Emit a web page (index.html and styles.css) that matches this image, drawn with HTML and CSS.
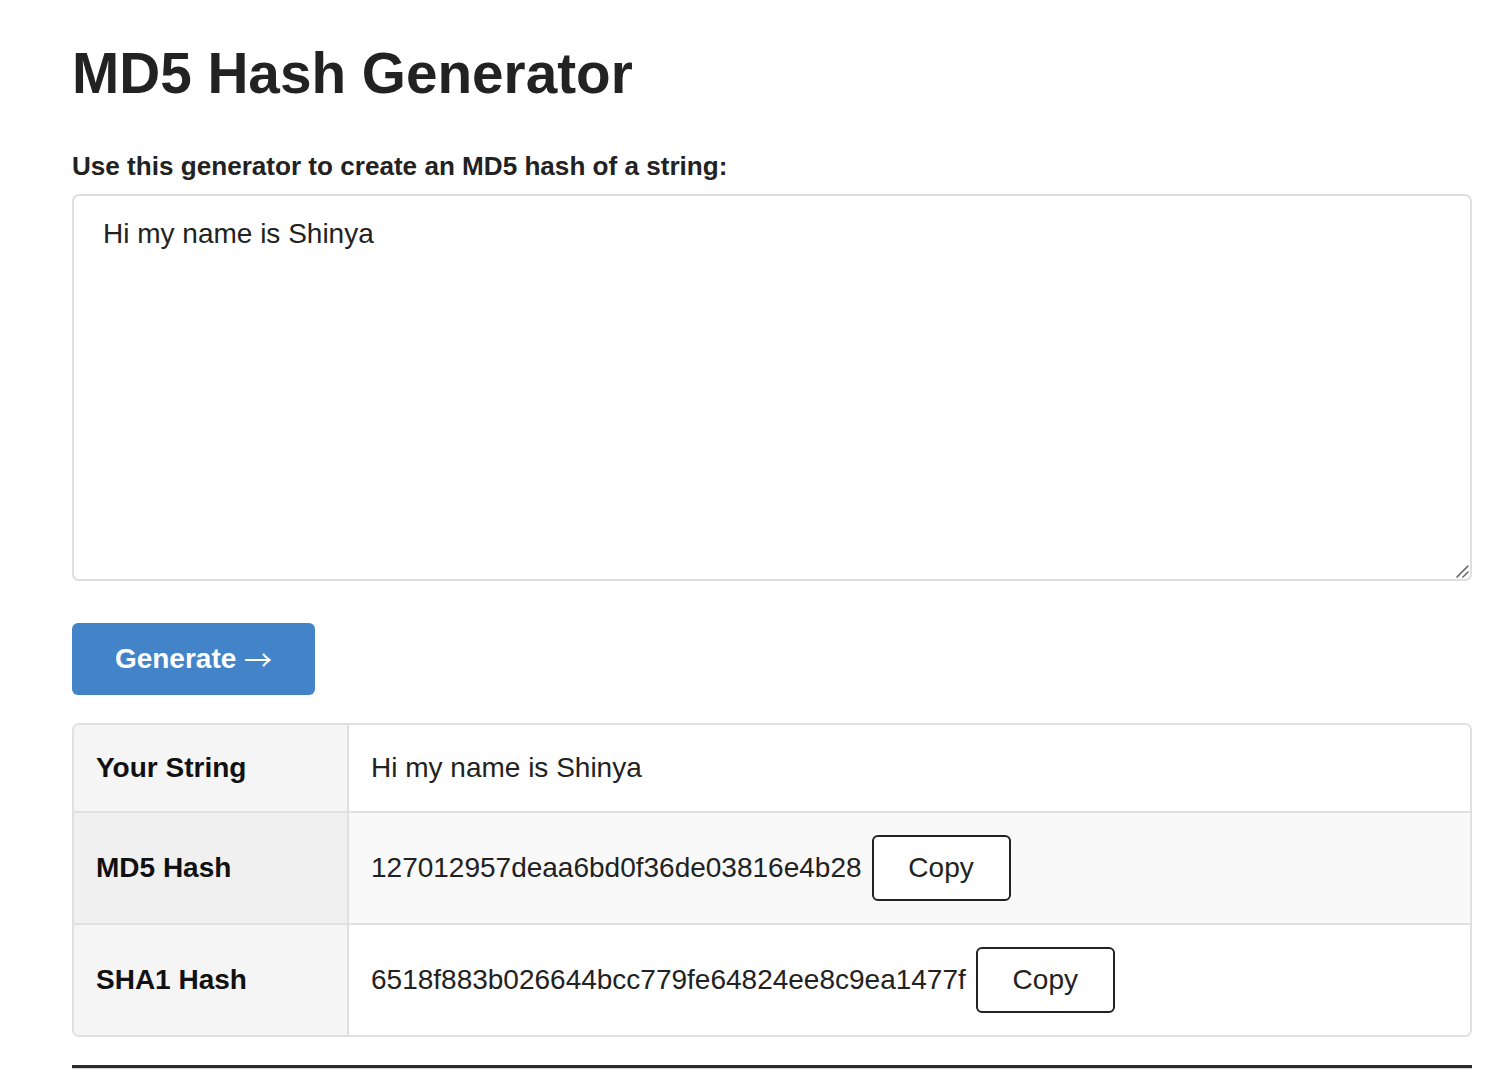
FILE: index.html
```html
<!DOCTYPE html>
<html lang="en">
<head>
<meta charset="utf-8">
<title>MD5 Hash Generator</title>
<link rel="stylesheet" href="styles.css">
</head>
<body>
<main class="page">
  <h1 class="title">MD5 Hash Generator</h1>
  <label class="field-label" for="input">Use this generator to create an MD5 hash of a string:</label>
  <div class="input-wrap">
    <textarea id="input" class="input">Hi my name is Shinya</textarea>
    <svg class="grip" width="14" height="14" viewBox="0 0 14 14" aria-hidden="true">
      <path d="M2 13 L13 2" stroke="#666" stroke-width="1.6" stroke-linecap="round"/>
      <path d="M8 13 L13 8" stroke="#666" stroke-width="1.6" stroke-linecap="round"/>
    </svg>
  </div>
  <button class="generate" type="button">Generate <span class="arrow">→</span></button>
  <table class="results">
    <tr class="row">
      <th class="key">Your String</th>
      <td class="val">Hi my name is Shinya</td>
    </tr>
    <tr class="row row-alt">
      <th class="key">MD5 Hash</th>
      <td class="val"><div class="hash"><span>127012957deaa6bd0f36de03816e4b28</span><button class="copy" type="button">Copy</button></div></td>
    </tr>
    <tr class="row">
      <th class="key">SHA1 Hash</th>
      <td class="val"><div class="hash"><span>6518f883b026644bcc779fe64824ee8c9ea1477f</span><button class="copy" type="button">Copy</button></div></td>
    </tr>
  </table>
  <hr class="rule">
</main>
</body>
</html>
```

FILE: styles.css
```css
html, body {
  margin: 0;
  padding: 0;
  background: #ffffff;
}

body {
  font-family: "Liberation Sans", Arial, Helvetica, sans-serif;
  color: #222222;
}

.page {
  width: 1400px;
  margin: 0 0 0 72px;
  padding-top: 40px;
  display: flex;
  flex-direction: column;
  align-items: flex-start;
}

.title {
  margin: 0 0 43px 0;
  font-size: 56.7px;
  line-height: 68px;
  font-weight: 700;
  color: #222222;
}

.field-label {
  font-size: 26.1px;
  line-height: 31px;
  font-weight: 700;
  margin-bottom: 12px;
}

.input-wrap {
  position: relative;
  width: 1400px;
  height: 387px;
}

.input {
  display: block;
  box-sizing: border-box;
  width: 1400px;
  height: 387px;
  margin: 0;
  padding: 17px 29px;
  border: 2px solid #dedede;
  border-radius: 7px;
  font-family: "Liberation Sans", Arial, Helvetica, sans-serif;
  font-size: 28px;
  line-height: 42px;
  color: #222222;
  background: #ffffff;
  resize: none;
  outline: none;
}

.grip {
  position: absolute;
  right: 3px;
  bottom: 3px;
}

.generate {
  margin-top: 42px;
  box-sizing: border-box;
  width: 243px;
  height: 72px;
  padding: 0 0 0 0;
  border: none;
  border-radius: 6px;
  background: #4384c9;
  color: #ffffff;
  font-family: "Liberation Sans", Arial, Helvetica, sans-serif;
  font-size: 28px;
  font-weight: 700;
  line-height: 42px;
}

.arrow {
  font-family: "Noto Sans CJK JP", "DejaVu Sans", sans-serif;
  font-weight: 400;
  font-size: 28px;
  vertical-align: -3px;
}

.results {
  margin-top: 28px;
  width: 1400px;
  border-collapse: separate;
  border-spacing: 0;
  border: 2px solid #e0e0e0;
  border-radius: 7px;
  overflow: hidden;
  font-size: 28px;
  line-height: 42px;
}

.key {
  width: 229px;
  padding: 22px 22px 22px 22px;
  text-align: left;
  font-weight: 700;
  background: #f5f5f5;
  border-right: 2px solid #e0e0e0;
  color: #111111;
}

.val {
  padding: 22px 22px;
  background: #ffffff;
  color: #222222;
}

.row + .row .key,
.row + .row .val {
  border-top: 2px solid #e0e0e0;
}

.row-alt .key {
  background: #f0f0f0;
}

.row-alt .val {
  background: #f9f9f9;
}

.hash {
  display: flex;
  align-items: center;
  gap: 10px;
}

.copy {
  box-sizing: border-box;
  height: 66px;
  width: 139px;
  padding: 0;
  border: 2px solid #222222;
  border-radius: 6px;
  background: #ffffff;
  color: #222222;
  font-family: "Liberation Sans", Arial, Helvetica, sans-serif;
  font-size: 28px;
  line-height: 42px;
}

.rule {
  width: 1400px;
  margin: 28px 0 0 0;
  border: none;
  border-top: 3px solid #2b2b2b;
  border-bottom: 1px solid #d0d0d0;
  height: 0;
}
```
